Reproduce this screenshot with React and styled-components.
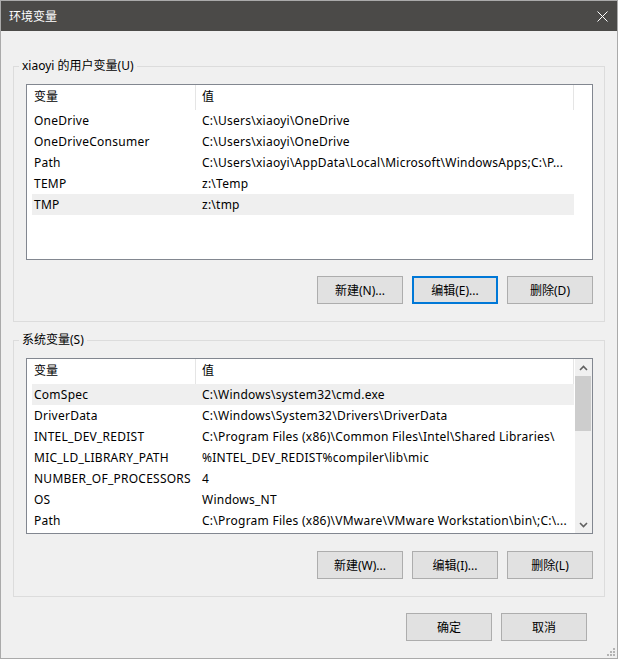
import React from 'react';
import styled, { createGlobalStyle } from 'styled-components';

const GlobalStyle = createGlobalStyle`
  html, body {
    margin: 0;
    padding: 0;
    background: #f0f0f0;
  }
  * {
    box-sizing: border-box;
  }
`;

const FONT = `"Noto Sans", "Noto Sans CJK SC", sans-serif`;

const Window = styled.div`
  position: relative;
  width: 618px;
  height: 659px;
  border: 1px solid #aaaaaa;
  background: #f0f0f0;
  font-family: ${FONT};
  font-size: 12px;
  color: #000;
  display: flex;
  flex-direction: column;
`;

const TitleBar = styled.div`
  height: 30px;
  background: #4b4a48;
  display: flex;
  align-items: center;
  justify-content: space-between;
  padding-left: 8px;
  color: #fff;
`;

const Title = styled.span`
  font-family: "Noto Sans CJK SC", sans-serif;
  font-size: 12px;
  line-height: 16px;
`;

const CloseButton = styled.div`
  width: 30px;
  height: 30px;
  display: flex;
  align-items: center;
  justify-content: center;
`;

const Body = styled.div`
  flex: 1;
  display: flex;
  flex-direction: column;
  padding: 27px 12px 0 12px;
`;

const Group = styled.fieldset`
  margin: 0 0 ${p => p.$gap || 0}px 0;
  border: 1px solid #dcdcdc;
  padding: 10px 11px 17px 12px;
  min-width: 0;
`;

const Legend = styled.legend`
  padding: 0 3px;
  margin-left: -7px;
  line-height: 16px;
  font-size: 12px;
`;

const List = styled.div`
  height: 176px;
  border: 1px solid #828790;
  background: #fff;
  display: flex;
  overflow: hidden;
`;

const Table = styled.div`
  width: 548px;
  padding-left: 5px;
`;

const Header = styled.div`
  width: 542px;
  height: 25px;
  display: grid;
  grid-template-columns: 164px 1fr;
  border-right: 1px solid #e5e5e5;
`;

const HeadCell = styled.div`
  line-height: 24px;
  padding-left: ${p => (p.$first ? 2 : 6)}px;
  border-right: ${p => (p.$first ? '1px solid #e5e5e5' : 'none')};
`;

const Row = styled.div`
  width: 542px;
  height: 21px;
  display: grid;
  grid-template-columns: 164px 1fr;
  background: ${p => (p.$selected ? '#efefef' : 'transparent')};
`;

const Cell = styled.div`
  line-height: 21px;
  letter-spacing: 0.25px;
  padding-left: ${p => (p.$first ? 2 : 6)}px;
  white-space: nowrap;
  overflow: hidden;
`;

const Scrollbar = styled.div`
  width: 17px;
  margin-left: auto;
  background: #f0f0f0;
  display: flex;
  flex-direction: column;
`;

const ArrowButton = styled.div`
  height: 17px;
  display: flex;
  align-items: center;
  justify-content: center;
`;

const Thumb = styled.div`
  height: 55px;
  margin-right: 1px;
  background: #cdcdcd;
`;

const Track = styled.div`
  flex: 1;
`;

const ButtonRow = styled.div`
  display: flex;
  justify-content: flex-end;
  gap: 9px;
  margin-top: ${p => p.$top || 16}px;
  padding-right: ${p => p.$right || 0}px;
`;

const Button = styled.div`
  width: 86px;
  height: 28px;
  border: ${p => (p.$focused ? '2px solid #0078d7' : '1px solid #adadad')};
  background: #e1e1e1;
  display: flex;
  align-items: center;
  justify-content: center;
  font-size: 12px;
`;

const Grip = styled.svg`
  position: absolute;
  right: 2px;
  bottom: 2px;
`;

const userVars = [
  ['OneDrive', 'C:\\Users\\xiaoyi\\OneDrive'],
  ['OneDriveConsumer', 'C:\\Users\\xiaoyi\\OneDrive'],
  ['Path', 'C:\\Users\\xiaoyi\\AppData\\Local\\Microsoft\\WindowsApps;C:\\P...'],
  ['TEMP', 'z:\\Temp'],
  ['TMP', 'z:\\tmp', true],
];

const systemVars = [
  ['ComSpec', 'C:\\Windows\\system32\\cmd.exe', true],
  ['DriverData', 'C:\\Windows\\System32\\Drivers\\DriverData'],
  ['INTEL_DEV_REDIST', 'C:\\Program Files (x86)\\Common Files\\Intel\\Shared Libraries\\'],
  ['MIC_LD_LIBRARY_PATH', '%INTEL_DEV_REDIST%compiler\\lib\\mic'],
  ['NUMBER_OF_PROCESSORS', '4'],
  ['OS', 'Windows_NT'],
  ['Path', 'C:\\Program Files (x86)\\VMware\\VMware Workstation\\bin\\;C:\\...'],
];

const Chevron = ({ down }) => (
  <svg width="9" height="6" viewBox="0 0 9 6">
    <path
      d={down ? 'M1 1 L4.5 4.5 L8 1' : 'M1 5 L4.5 1.5 L8 5'}
      fill="none"
      stroke="#606060"
      strokeWidth="1.6"
    />
  </svg>
);

const VarList = ({ rows, scroll }) => (
  <List>
    <Table>
      <Header>
        <HeadCell $first>变量</HeadCell>
        <HeadCell>值</HeadCell>
      </Header>
      {rows.map(([name, value, selected]) => (
        <Row key={name + value} $selected={selected}>
          <Cell $first>{name}</Cell>
          <Cell>{value}</Cell>
        </Row>
      ))}
    </Table>
    {scroll && (
      <Scrollbar>
        <ArrowButton>
          <Chevron />
        </ArrowButton>
        <Thumb />
        <Track />
        <ArrowButton>
          <Chevron down />
        </ArrowButton>
      </Scrollbar>
    )}
  </List>
);

export default function App() {
  return (
    <>
      <GlobalStyle />
      <Window>
        <TitleBar>
          <Title>环境变量</Title>
          <CloseButton>
            <svg width="11" height="11" viewBox="0 0 11 11">
              <path d="M0.5 0.5 L10.5 10.5 M10.5 0.5 L0.5 10.5" stroke="#fff" strokeWidth="1" />
            </svg>
          </CloseButton>
        </TitleBar>
        <Body>
          <Group $gap={10}>
            <Legend>xiaoyi 的用户变量(U)</Legend>
            <VarList rows={userVars} />
            <ButtonRow>
              <Button>新建(N)...</Button>
              <Button $focused>编辑(E)...</Button>
              <Button>删除(D)</Button>
            </ButtonRow>
          </Group>
          <Group>
            <Legend>系统变量(S)</Legend>
            <VarList rows={systemVars} scroll />
            <ButtonRow $top={17}>
              <Button>新建(W)...</Button>
              <Button>编辑(I)...</Button>
              <Button>删除(L)</Button>
            </ButtonRow>
          </Group>
          <ButtonRow $top={16} $right={18}>
            <Button>确定</Button>
            <Button>取消</Button>
          </ButtonRow>
        </Body>
        <Grip width="8" height="8" viewBox="0 0 8 8">
          <g fill="#b4b4b4">
            <rect x="6" y="0" width="2" height="2" />
            <rect x="3" y="3" width="2" height="2" />
            <rect x="6" y="3" width="2" height="2" />
            <rect x="0" y="6" width="2" height="2" />
            <rect x="3" y="6" width="2" height="2" />
            <rect x="6" y="6" width="2" height="2" />
          </g>
        </Grip>
      </Window>
    </>
  );
}
